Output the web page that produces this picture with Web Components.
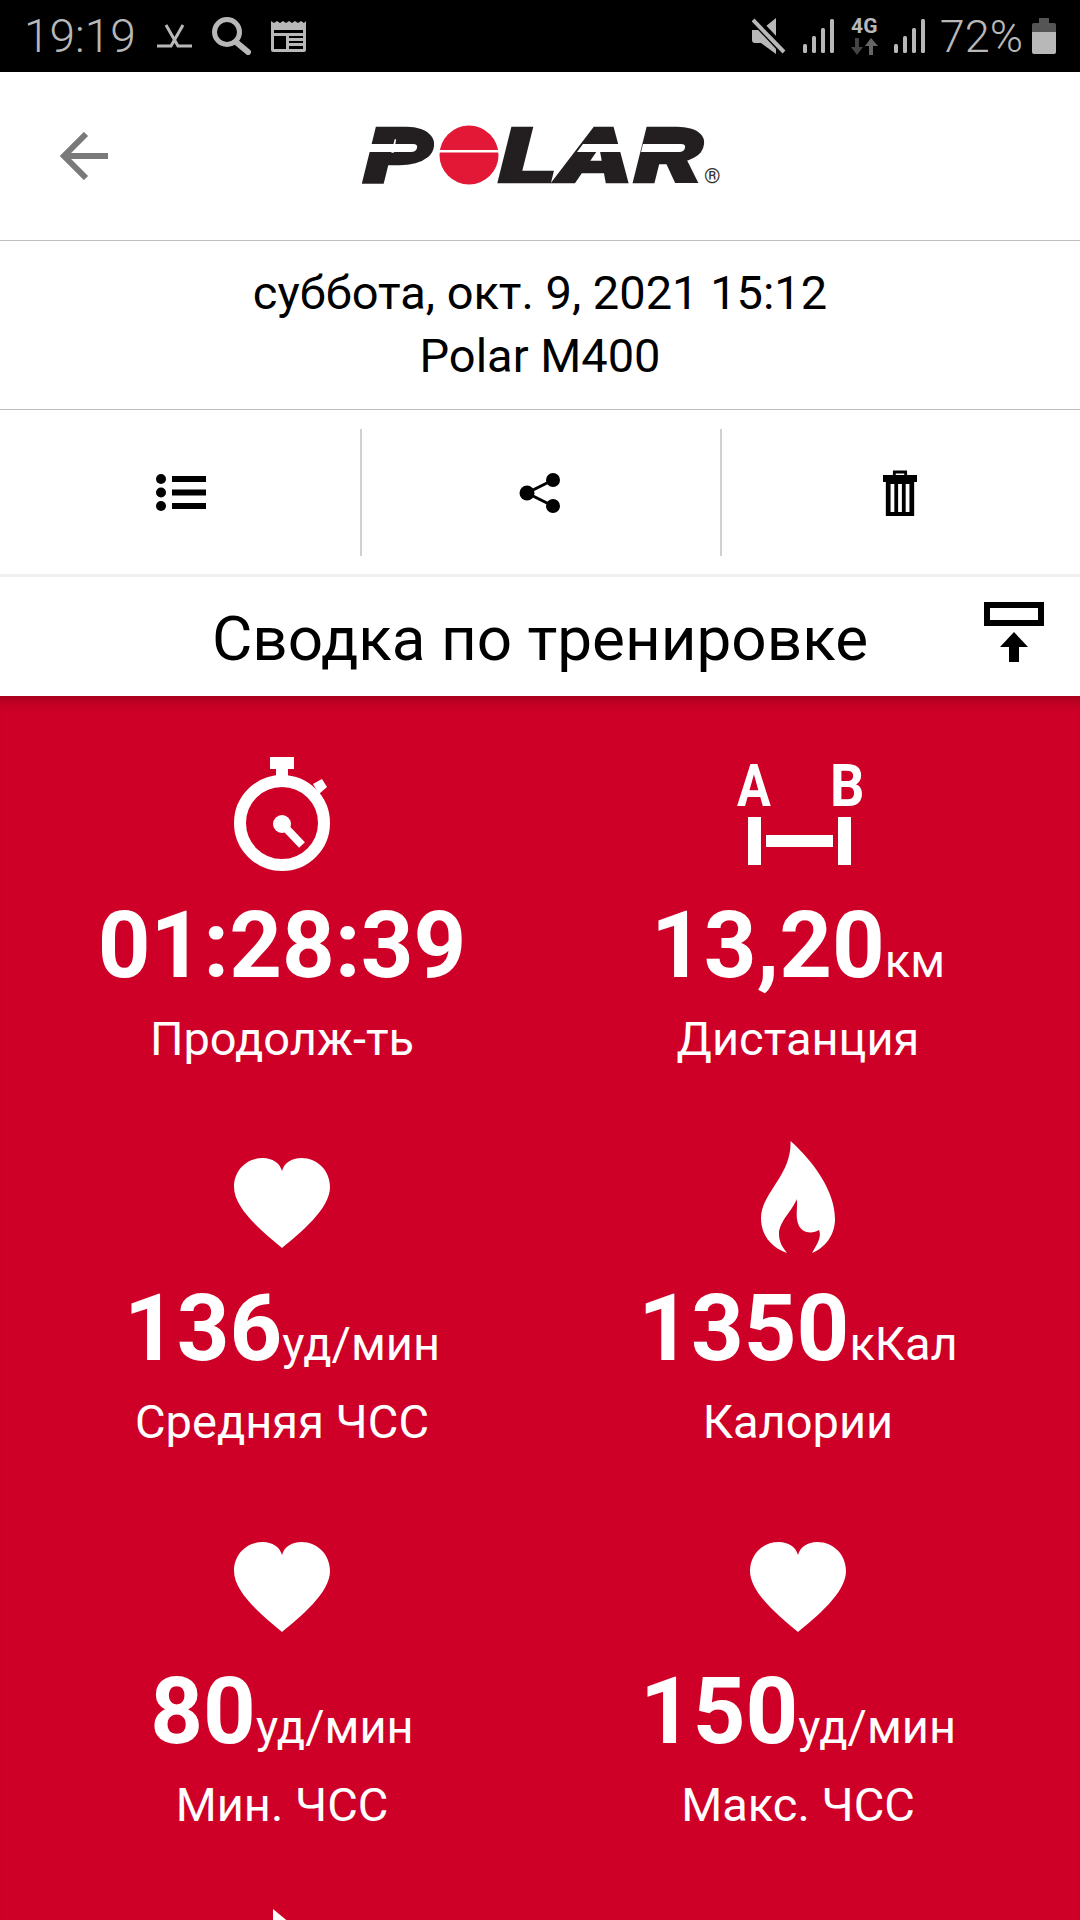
<!DOCTYPE html>
<html lang="ru">
<head>
<meta charset="utf-8">
<title>Polar</title>
<style>
    html, body { margin: 0; padding: 0; background: #fff; }
    body { width: 1080px; height: 1920px; overflow: hidden; font-family: Roboto, "Liberation Sans", sans-serif; }
</style>
</head>
<body>
<polar-screen>
    <status-bar></status-bar>
    <app-header></app-header>
    <session-info>
        <span>суббота, окт. 9, 2021 15:12</span>
        <span>Polar M400</span>
    </session-info>
    <action-bar></action-bar>
    <section-title>Сводка по тренировке</section-title>
    <stat-grid>
        <stat-tile value="01:28:39" label="Продолж-ть">
            <svg width="96" height="114" viewBox="0 0 96 114" fill="#fff">
                <rect x="36" width="24" height="12"/>
                <rect x="42" y="10" width="12" height="12"/>
                <polygon points="79,27 88,22 93,30 85,37"/>
                <circle cx="48" cy="66" r="42" fill="none" stroke="#fff" stroke-width="12"/>
                <circle cx="48" cy="67" r="9"/>
                <path d="M48 67 L68 88" stroke="#fff" stroke-width="8"/>
            </svg>
        </stat-tile>
        <stat-tile value="13,20" unit="км" label="Дистанция">
            <svg width="180" height="142" viewBox="-30 -20 180 142" fill="#fff">
                <text transform="translate(-1 43) scale(.84 1)" font-family="Roboto" font-weight="700" font-size="60">A</text>
                <text transform="translate(92 43) scale(.9 1)" font-family="Roboto" font-weight="700" font-size="60">B</text>
                <rect x="10" y="54" width="13" height="48"/>
                <rect x="28" y="72" width="67" height="12"/>
                <rect x="100" y="54" width="13" height="48"/>
            </svg>
        </stat-tile>
        <stat-tile value="136" unit="уд/мин" label="Средняя ЧСС">
            <svg style="margin-top:12px" width="96" height="90" viewBox="0 0 96 90"><path fill="#fff" d="M48 13 C50 5 58 0 67 0 C84 0 96 13 96 29 C96 51 66 75 48 90 C30 75 0 51 0 29 C0 13 12 0 29 0 C38 0 46 5 48 13Z"/></svg>
        </stat-tile>
        <stat-tile value="1350" unit="кКал" label="Калории">
            <svg width="74" height="112" viewBox="0 0 74 112"><path fill="#fff" d="M29.5 0 C52 20 74 50 74 78 C74 94 64 107 51 112 C56 103 61 96 58 89 C52 93 38 94 36 78 C35 70 37 64 35.5 58 C33 68 18 80 18 93 C18 101 22 107 26 112 C10 106 0 94 0 77 C0 52 31 34 29.5 0Z"/></svg>
        </stat-tile>
        <stat-tile value="80" unit="уд/мин" label="Мин. ЧСС">
            <svg style="margin-top:13px" width="96" height="90" viewBox="0 0 96 90"><path fill="#fff" d="M48 13 C50 5 58 0 67 0 C84 0 96 13 96 29 C96 51 66 75 48 90 C30 75 0 51 0 29 C0 13 12 0 29 0 C38 0 46 5 48 13Z"/></svg>
        </stat-tile>
        <stat-tile value="150" unit="уд/мин" label="Макс. ЧСС">
            <svg style="margin-top:13px" width="96" height="90" viewBox="0 0 96 90"><path fill="#fff" d="M48 13 C50 5 58 0 67 0 C84 0 96 13 96 29 C96 51 66 75 48 90 C30 75 0 51 0 29 C0 13 12 0 29 0 C38 0 46 5 48 13Z"/></svg>
        </stat-tile>
        <stat-tile>
            <svg width="96" height="120" viewBox="0 0 96 120"><polygon fill="#fff" points="39,6 80,40 39,74"/></svg>
        </stat-tile>
    </stat-grid>
</polar-screen>

<script>
class PolarScreen extends HTMLElement {
    constructor() {
        super();
        this.attachShadow({ mode: 'open' });
        this.shadowRoot.innerHTML = `
            <style>
                :host { display: flex; flex-direction: column; width: 1080px; height: 1920px; overflow: hidden; background: #fff; }
            </style>
            <slot></slot>
        `;
    }
}

class StatusBar extends HTMLElement {
    constructor() {
        super();
        this.attachShadow({ mode: 'open' });
        const signal = `
            <svg width="32" height="34" viewBox="0 0 32 34" fill="#b8b8b8">
                <rect x="0" y="25" width="4" height="9" rx="1.5"/>
                <rect x="9" y="17" width="4" height="17" rx="1.5"/>
                <rect x="18" y="9" width="4" height="25" rx="1.5"/>
                <rect x="27" y="0" width="4" height="34" rx="1.5"/>
            </svg>`;
        this.shadowRoot.innerHTML = `
            <style>
                :host {
                    display: flex;
                    align-items: center;
                    height: 72px;
                    flex: none;
                    padding: 0 24px;
                    box-sizing: border-box;
                    background: #000;
                    color: #b8b8b8;
                    font: 300 46px Roboto, sans-serif;
                }
                .time { margin-right: 21px; }
                .right { margin-left: auto; display: flex; align-items: center; }
                svg { display: block; flex: none; }
                .net { display: flex; flex-direction: column; align-items: center; width: 29px; margin: 0 15px; }
                .net b { font: 700 21px/18px Roboto, sans-serif; }
                .pct { margin: 0 9px 0 14px; font-size: 45px; }
            </style>
            <span class="time">19:19</span>
            <svg width="35" height="25" viewBox="0 0 35 25" fill="none" stroke="#b8b8b8" stroke-width="3" style="margin-right:20px">
                <path d="M9 1 L21 22 H35 M26 1 L14 22 H0"/>
            </svg>
            <svg width="39" height="38" viewBox="0 0 39 38" fill="none" stroke="#b8b8b8" style="margin-right:20px">
                <circle cx="15" cy="15" r="12.5" stroke-width="5"/>
                <path d="M24 25 L36 35" stroke-width="6" stroke-linecap="round"/>
            </svg>
            <svg width="35" height="31" viewBox="0 0 35 31">
                <path fill="#b8b8b8" d="M0 0 l3 2 3-2 3 2 3-2 3 2 3-2 3 2 3-2 3 2 3-2 3 2 2-2 V29 a2 2 0 0 1-2 2 H2 a2 2 0 0 1-2-2Z"/>
                <path fill="#000" d="M3 9 H32 V12 H3Z M3 15 H15 V28 H3Z M18 15 H32 V17 H18Z M18 20 H32 V22 H18Z M18 25 H32 V28 H18Z"/>
            </svg>
            <div class="right">
                <svg width="34" height="36" viewBox="0 0 34 36" style="margin-right:17px">
                    <path fill="#b8b8b8" d="M0 12 H9 L24 0 V36 L9 25 H3 Q0 25 0 22Z"/>
                    <path d="M2 1 L33 34" stroke="#000" stroke-width="9"/>
                    <path d="M1 2 L32 34" stroke="#b8b8b8" stroke-width="4"/>
                </svg>
                ${signal}
                <div class="net">
                    <b>4G</b>
                    <svg width="27" height="17" viewBox="0 0 27 17" style="margin-top:3px">
                        <path fill="#444" d="M4 0 H8 V9 H12 L6 17 L0 9 H4Z"/>
                        <path fill="#666" d="M18 17 H22 V8 H27 L20 0 L14 8 H18Z"/>
                    </svg>
                </div>
                ${signal}
                <span class="pct">72%</span>
                <svg width="24" height="36" viewBox="0 0 24 36">
                    <path fill="#555" d="M7 0 H17 V5 H22 Q24 5 24 7 V14 H0 V7 Q0 5 2 5 H7Z"/>
                    <path fill="#b8b8b8" d="M0 14 H24 V34 Q24 36 22 36 H2 Q0 36 0 34Z"/>
                </svg>
            </div>
        `;
    }
}

class AppHeader extends HTMLElement {
    constructor() {
        super();
        this.attachShadow({ mode: 'open' });
        // wordmark stays real text, the disc and the slits are the only drawn parts
        this.shadowRoot.innerHTML = `
            <style>
                :host {
                    display: flex;
                    align-items: center;
                    justify-content: center;
                    position: relative;
                    flex: none;
                    height: 169px;
                    box-sizing: border-box;
                    border-bottom: 1px solid #bdbdbd;
                }
                .back { position: absolute; left: 60px; top: 60px; }
                .mark { font-family: Roboto, sans-serif; font-weight: 900; font-style: italic; fill: #231f20; stroke: #231f20; stroke-width: 2.5; }
                .reg { font: 400 21px Roboto, sans-serif; fill: #333; }
            </style>
            <svg class="back" width="48" height="48" viewBox="0 0 48 48" fill="none" stroke="#7a7a7a" stroke-width="6">
                <path d="M48 24 H4 M26 2 L4 24 L26 46"/>
            </svg>
            <svg width="370" height="104" viewBox="0 -20 370 104" style="margin-left:12px">
                <g transform="translate(0 58) scale(1.44 1)" class="mark">
                    <text font-size="76" x="2">P</text>
                    <text font-size="76" x="96">L</text>
                    <text font-size="76" x="138">A</text>
                    <text font-size="76" x="190">R</text>
                </g>
                <path fill="#231f20" d="M36 10 H66 V34 H32Z"/>
                <path fill="#fff" d="M8 20 H52 Q57 20 56 24 Q55 28 50 28 H6Z"/>
                <path fill="#231f20" d="M296 10 H326 V34 H292Z"/>
                <path fill="#fff" d="M282 20 H320 Q325 20 324 24 Q323 28 318 28 H280Z"/>
                <path fill="#fff" d="M222 20 H262 V28 H216Z"/>
                <circle cx="108" cy="31" r="29.5" fill="#e31837"/>
                <rect x="76" y="26" width="64" height="2.5" fill="#fff"/>
                <text class="reg" x="343" y="59">®</text>
            </svg>
        `;
    }
}

class SessionInfo extends HTMLElement {
    constructor() {
        super();
        this.attachShadow({ mode: 'open' });
        this.shadowRoot.innerHTML = `
            <style>
                :host {
                    display: flex;
                    flex-direction: column;
                    align-items: center;
                    justify-content: center;
                    flex: none;
                    height: 169px;
                    padding-bottom: 3px;
                    box-sizing: border-box;
                    border-bottom: 1px solid #bdbdbd;
                    color: #000;
                    font: 400 47px/63px Roboto, sans-serif;
                }
                ::slotted(span) { display: block; }
            </style>
            <slot></slot>
        `;
    }
}

class ActionBar extends HTMLElement {
    constructor() {
        super();
        this.attachShadow({ mode: 'open' });
        this.shadowRoot.innerHTML = `
            <style>
                :host {
                    display: grid;
                    grid-template-columns: 360px 360px 1fr;
                    flex: none;
                    height: 167px;
                    padding: 19px 0 18px;
                    box-sizing: border-box;
                    border-bottom: 3px solid #f0f0f0;
                }
                div { display: flex; align-items: center; justify-content: center; }
                div + div { border-left: 2px solid #d0d0d0; }
                svg { display: block; }
            </style>
            <div>
                <svg width="50" height="37" viewBox="0 0 50 37" style="margin-left:2px">
                    <circle cx="5" cy="5" r="5"/><circle cx="5" cy="18.5" r="5"/><circle cx="5" cy="32" r="5"/>
                    <rect x="16" y="2" width="34" height="6"/><rect x="16" y="15.5" width="34" height="6"/><rect x="16" y="29" width="34" height="6"/>
                </svg>
            </div>
            <div>
                <svg width="42" height="40" viewBox="0 0 42 40" style="margin-right:3px">
                    <circle cx="8" cy="20" r="7.5"/><circle cx="34" cy="7" r="7"/><circle cx="34" cy="33" r="7"/>
                    <path d="M34 7 L8 20 L34 33" fill="none" stroke="#000" stroke-width="3"/>
                </svg>
            </div>
            <div>
                <svg width="34" height="46" viewBox="0 0 36 46" preserveAspectRatio="none" style="margin-right:2px">
                    <path d="M12 5 V2 H24 V5" fill="none" stroke="#000" stroke-width="3"/>
                    <path d="M0 5 H36 V12 H0Z"/>
                    <path d="M3 12 H33 V46 H3Z M8 14 V42 H12 V14Z M16 14 V42 H20 V14Z M24 14 V42 H28 V14Z" fill-rule="evenodd"/>
                </svg>
            </div>
        `;
    }
}

class SectionTitle extends HTMLElement {
    constructor() {
        super();
        this.attachShadow({ mode: 'open' });
        this.shadowRoot.innerHTML = `
            <style>
                :host {
                    display: flex;
                    align-items: center;
                    justify-content: center;
                    position: relative;
                    flex: none;
                    height: 119px;
                    padding-top: 3px;
                    box-sizing: border-box;
                    background: #fff;
                    color: #000;
                    font: 400 62px Roboto, sans-serif;
                }
                svg { position: absolute; left: 984px; top: 25px; }
            </style>
            <slot></slot>
            <svg width="60" height="60" viewBox="0 0 60 60">
                <rect x="3" y="3" width="54" height="18" fill="none" stroke="#000" stroke-width="6"/>
                <path d="M30 30 L44 45 H35 V60 H25 V45 H16Z"/>
            </svg>
        `;
    }
}

class StatGrid extends HTMLElement {
    constructor() {
        super();
        this.attachShadow({ mode: 'open' });
        this.shadowRoot.innerHTML = `
            <style>
                :host {
                    display: grid;
                    grid-template-columns: 516px 516px;
                    grid-auto-rows: 383px;
                    flex: none;
                    padding: 58px 24px 0;
                    background: #cf0027;
                    box-shadow: inset 0 14px 14px -10px rgba(60, 0, 10, .35);
                }
            </style>
            <slot></slot>
        `;
    }
}

class StatTile extends HTMLElement {
    constructor() {
        super();
        this.attachShadow({ mode: 'open' });
        this.shadowRoot.innerHTML = `
            <style>
                :host { display: flex; flex-direction: column; align-items: center; color: #fff; font-family: Roboto, sans-serif; }
                .icon { display: flex; align-items: center; justify-content: center; height: 120px; }
                .value { margin-top: 26px; font-size: 47px; line-height: 92px; white-space: nowrap; }
                .value b { font-size: 92px; font-weight: 700; }
                .label { margin-top: 8px; font-size: 47px; line-height: 47px; }
            </style>
            <div class="icon"><slot></slot></div>
            <div class="value"><b></b><span></span></div>
            <div class="label"></div>
        `;
    }

    connectedCallback() {
        this.shadowRoot.querySelector('b').textContent = this.getAttribute('value') || '';
        this.shadowRoot.querySelector('span').textContent = this.getAttribute('unit') || '';
        this.shadowRoot.querySelector('.label').textContent = this.getAttribute('label') || '';
    }
}

customElements.define('polar-screen', PolarScreen);
customElements.define('status-bar', StatusBar);
customElements.define('app-header', AppHeader);
customElements.define('session-info', SessionInfo);
customElements.define('action-bar', ActionBar);
customElements.define('section-title', SectionTitle);
customElements.define('stat-grid', StatGrid);
customElements.define('stat-tile', StatTile);
</script>
</body>
</html>
